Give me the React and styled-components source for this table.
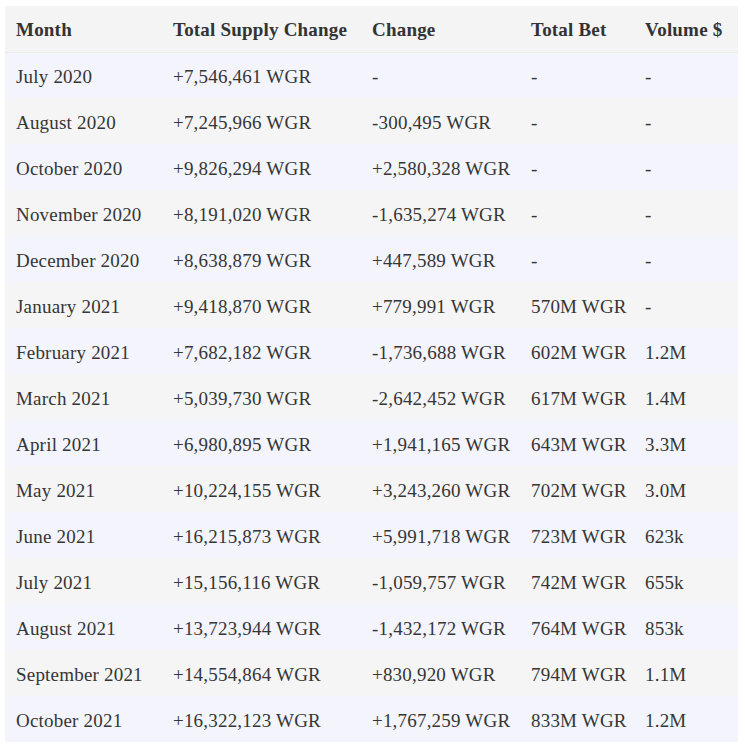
import React from "react";
import styled, { createGlobalStyle } from "styled-components";

const Global = createGlobalStyle`
  html, body { margin: 0; padding: 0; background: #ffffff; }
  body { font-family: "Liberation Serif", "Times New Roman", serif; }
`;

const Wrap = styled.div`
  padding: 6px 7px 5px 5px;
`;

const Table = styled.table`
  width: 733px;
  border-collapse: collapse;
  table-layout: fixed;
  color: #363636;
  font-size: 19px;
  letter-spacing: 0.2px;
`;

const Col = styled.col`
  width: ${(p) => p.$w}px;
`;

const HeadRow = styled.tr`
  background: #f4f4f4;
  height: 46px;
  border-bottom: 1px solid #ececec;
`;

const Th = styled.th`
  text-align: left;
  font-weight: 700;
  padding: 3px 0 0 11px;
  white-space: nowrap;
  color: #333333;
`;

const Row = styled.tr`
  height: 46px;
  background: ${(p) => (p.$odd ? "#f3f4fc" : "#f5f5f5")};
`;

const Td = styled.td`
  padding: 4px 0 0 11px;
  white-space: nowrap;
  vertical-align: middle;
`;

const widths = [157, 199, 159, 114, 104];
const headers = ["Month", "Total Supply Change", "Change", "Total Bet", "Volume $"];

const rows = [
  ["July 2020", "+7,546,461 WGR", "-", "-", "-"],
  ["August 2020", "+7,245,966 WGR", "-300,495 WGR", "-", "-"],
  ["October 2020", "+9,826,294 WGR", "+2,580,328 WGR", "-", "-"],
  ["November 2020", "+8,191,020 WGR", "-1,635,274 WGR", "-", "-"],
  ["December 2020", "+8,638,879 WGR", "+447,589 WGR", "-", "-"],
  ["January 2021", "+9,418,870 WGR", "+779,991 WGR", "570M WGR", "-"],
  ["February 2021", "+7,682,182 WGR", "-1,736,688 WGR", "602M WGR", "1.2M"],
  ["March 2021", "+5,039,730 WGR", "-2,642,452 WGR", "617M WGR", "1.4M"],
  ["April 2021", "+6,980,895 WGR", "+1,941,165 WGR", "643M WGR", "3.3M"],
  ["May 2021", "+10,224,155 WGR", "+3,243,260 WGR", "702M WGR", "3.0M"],
  ["June 2021", "+16,215,873 WGR", "+5,991,718 WGR", "723M WGR", "623k"],
  ["July 2021", "+15,156,116 WGR", "-1,059,757 WGR", "742M WGR", "655k"],
  ["August 2021", "+13,723,944 WGR", "-1,432,172 WGR", "764M WGR", "853k"],
  ["September 2021", "+14,554,864 WGR", "+830,920 WGR", "794M WGR", "1.1M"],
  ["October 2021", "+16,322,123 WGR", "+1,767,259 WGR", "833M WGR", "1.2M"],
];

export default function App() {
  return (
    <>
      <Global />
      <Wrap>
        <Table>
          <colgroup>
            {widths.map((w, i) => (
              <Col key={i} $w={w} />
            ))}
          </colgroup>
          <thead>
            <HeadRow>
              {headers.map((h) => (
                <Th key={h}>{h}</Th>
              ))}
            </HeadRow>
          </thead>
          <tbody>
            {rows.map((r, i) => (
              <Row key={i} $odd={i % 2 === 0}>
                {r.map((c, j) => (
                  <Td key={j}>{c}</Td>
                ))}
              </Row>
            ))}
          </tbody>
        </Table>
      </Wrap>
    </>
  );
}
